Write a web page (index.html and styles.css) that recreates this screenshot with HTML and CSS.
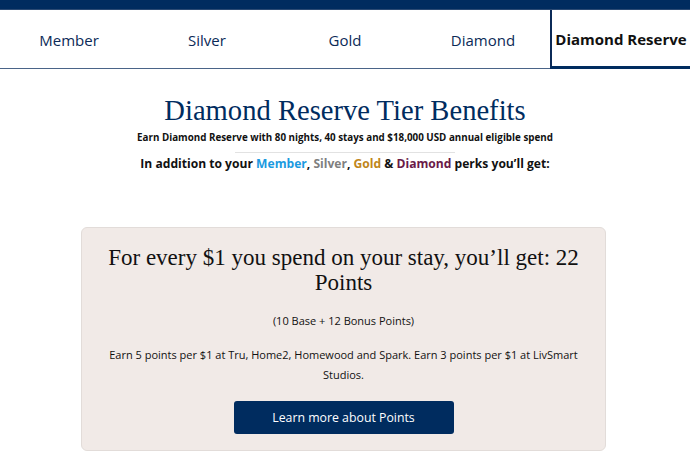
FILE: index.html
```html
<!DOCTYPE html>
<html lang="en">
<head>
<meta charset="utf-8">
<title>Diamond Reserve Tier Benefits</title>
<link rel="stylesheet" href="styles.css">
</head>
<body>
<div class="topbar"></div>
<nav class="tabs">
  <div class="tab">Member</div>
  <div class="tab">Silver</div>
  <div class="tab">Gold</div>
  <div class="tab">Diamond</div>
  <div class="tab active">Diamond Reserve</div>
</nav>
<main class="content">
  <h1 class="title">Diamond Reserve Tier Benefits</h1>
  <p class="earn">Earn Diamond Reserve with 80 nights, 40 stays and $18,000 USD annual eligible spend</p>
  <hr class="divider">
  <p class="perks">In addition to your <span class="c-member">Member</span>, <span class="c-silver">Silver</span>, <span class="c-gold">Gold</span> &amp; <span class="c-diamond">Diamond</span> perks you’ll get:</p>
  <section class="card">
    <h2 class="card-title">For every $1 you spend on your stay, you’ll get: 22 Points</h2>
    <p class="card-sub">(10 Base + 12 Bonus Points)</p>
    <p class="card-text">Earn 5 points per $1 at Tru, Home2, Homewood and Spark. Earn 3 points per $1 at LivSmart Studios.</p>
    <a class="btn" href="#">Learn more about Points</a>
  </section>
</main>
</body>
</html>
```

FILE: styles.css
```css
* { box-sizing: border-box; }
html, body { margin: 0; padding: 0; background: #fff; }
body {
  font-family: "Open Sans", "Liberation Sans", sans-serif;
  color: #111;
  width: 690px;
  overflow: hidden;
}
.topbar {
  height: 10px;
  background: #002c5f;
  border-bottom: 1px solid #2b4a73;
}
.tabs {
  display: grid;
  grid-template-columns: repeat(5, 1fr);
  height: 59px;
  border-bottom: 1px solid #4a6488;
}
.tab {
  display: flex;
  align-items: center;
  justify-content: center;
  font-size: 15px;
  color: #0b2a57;
  padding-top: 2px;
}
.tab.active {
  font-weight: 700;
  color: #111;
  border-left: 2px solid #0b2a57;
  border-bottom: 3px solid #002c5f;
  margin-bottom: -1px;
  margin-left: -2px;
  padding-top: 2px;
}
.content {
  display: flex;
  flex-direction: column;
  align-items: center;
}
.title {
  font-family: "Liberation Serif", "DejaVu Serif", serif;
  font-weight: 400;
  font-size: 28.6px;
  color: #002c5f;
  margin: 25px 0 0;
  line-height: 34px;
}
.earn {
  font-size: 9.8px;
  font-weight: 700;
  margin: 2px 0 0;
  line-height: 16px;
}
.divider {
  width: 220px;
  border: 0;
  border-top: 1px solid #e2e2e2;
  margin: 6px 0 0;
}
.perks {
  font-size: 12.1px;
  font-weight: 700;
  margin: 1px 0 0;
  line-height: 20px;
}
.c-member { color: #1a9ae0; }
.c-silver { color: #7f7f7f; }
.c-gold { color: #c0861a; }
.c-diamond { color: #6a1a48; }
.card {
  width: 525px;
  align-self: flex-start;
  margin: 53px 0 0 81px;
  background: #f1eae7;
  border: 1px solid #e2dcd9;
  border-radius: 6px;
  padding: 17px 20px 16px;
  display: flex;
  flex-direction: column;
  align-items: center;
  text-align: center;
}
.card-title {
  font-family: "Liberation Serif", "DejaVu Serif", serif;
  font-weight: 400;
  font-size: 23px;
  line-height: 25px;
  margin: 0;
  color: #111;
}
.card-sub {
  font-size: 11px;
  margin: 18px 0 0;
  line-height: 16px;
}
.card-text {
  font-size: 11px;
  line-height: 20px;
  margin: 16px 0 0;
}
.btn {
  display: flex;
  align-items: center;
  justify-content: center;
  width: 220px;
  height: 33px;
  margin-top: 16px;
  background: #002c5f;
  color: #fff;
  border-radius: 3px;
  font-size: 12.3px;
  text-decoration: none;
}
```
